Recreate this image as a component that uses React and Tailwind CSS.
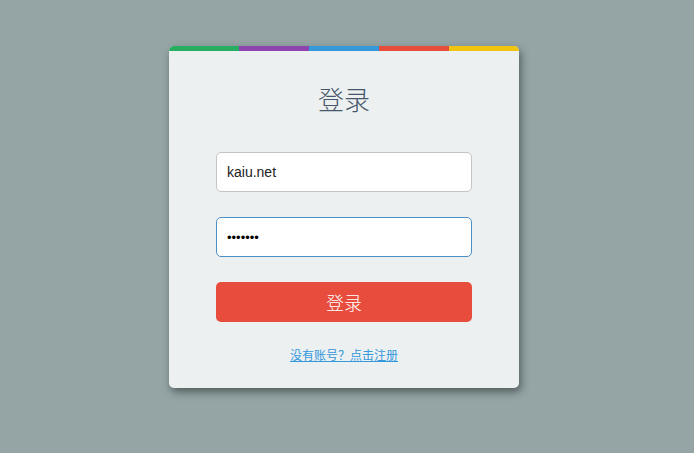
import { useState } from 'react'

const stripes = ['bg-[#27ae60]', 'bg-[#8e44ad]', 'bg-[#3498db]', 'bg-[#e74c3c]', 'bg-[#f1c40f]']

export default function App() {
  const [user, setUser] = useState('kaiu.net')
  const [pass, setPass] = useState('1234567')

  return (
    <div className="min-h-[453px] bg-[#95a5a6] flex justify-center pt-[46px] pr-[6px] font-['Liberation_Sans','Noto_Sans_CJK_SC',sans-serif]">
      <div className="w-[350px] h-[342px] bg-[#ecf0f1] rounded-[5px] overflow-hidden shadow-[2px_4px_8px_rgba(0,0,0,0.45)] flex flex-col">
        <div className="flex h-[5px]">
          {stripes.map(c => <div key={c} className={`flex-1 ${c}`} />)}
        </div>
        <div className="px-[47px] flex flex-col">
          <h1 className="mt-[28px] h-[40px] leading-[40px] text-center text-[26px] text-[#46566a] font-['Noto_Sans_CJK_SC',sans-serif] font-light">
            登录
          </h1>
          <input
            value={user}
            onChange={e => setUser(e.target.value)}
            className="mt-[33px] h-[40px] w-full px-[10px] bg-white border border-[#c4c4c4] rounded-[5px] text-[14px] text-[#222] outline-none"
          />
          <input
            type="password"
            value={pass}
            onChange={e => setPass(e.target.value)}
            className="mt-[25px] h-[40px] w-full px-[10px] bg-white border border-[#4a90c8] rounded-[5px] text-[13px] text-black outline-none"
          />
          <button className="mt-[25px] h-[40px] w-full rounded-[5px] bg-[#e74c3c] text-white text-[18px] font-['Noto_Sans_CJK_SC',sans-serif] font-light">
            登录
          </button>
          <a href="#" className="mt-[23px] h-[20px] leading-[20px] text-center text-[12px] text-[#3498db] underline font-['Noto_Sans_CJK_SC',sans-serif]">
            没有账号？点击注册
          </a>
        </div>
      </div>
    </div>
  )
}
